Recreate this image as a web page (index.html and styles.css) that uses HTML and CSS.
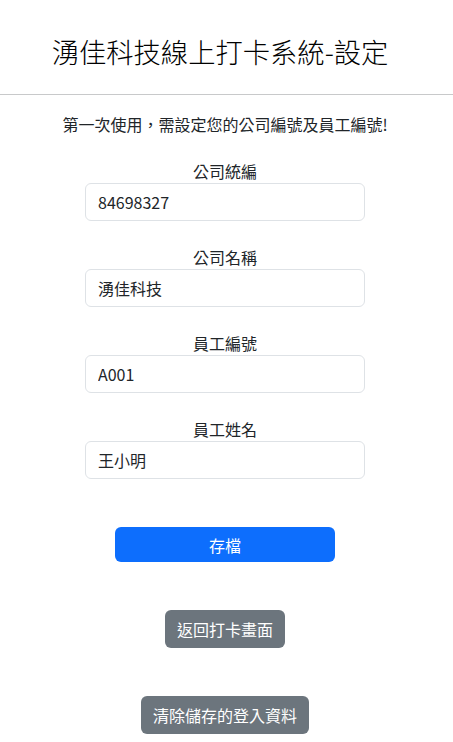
FILE: index.html
```html
<!DOCTYPE html>
<html>
<head>
  <meta charset="utf-8">
  <title>湧佳科技線上打卡系統-設定</title>
  <link rel="stylesheet" href="styles.css">
</head>
<body>
  <div class="header">
    <h1 class="title">湧佳科技線上打卡系統-設定</h1>
  </div>
  <hr class="divider">

  <div class="content">
    <p class="intro">第一次使用，需設定您的公司編號及員工編號!</p>

    <div class="form">
      <div class="field">
        <label for="comp-id">公司統編</label>
        <input id="comp-id" value="84698327">
      </div>
      <div class="field">
        <label for="comp-name">公司名稱</label>
        <input id="comp-name" value="湧佳科技">
      </div>
      <div class="field">
        <label for="emp-id">員工編號</label>
        <input id="emp-id" value="A001">
      </div>
      <div class="field">
        <label for="emp-name">員工姓名</label>
        <input id="emp-name" value="王小明">
      </div>
    </div>

    <div class="actions">
      <button class="btn btn-primary btn-save">存檔</button>
      <button class="btn btn-secondary">返回打卡畫面</button>
      <button class="btn btn-secondary">清除儲存的登入資料</button>
    </div>
  </div>
</body>
</html>
```

FILE: styles.css
```css
body {
  margin: 0;
  color: #212529;
  background-color: #fff;
  font-family: "Noto Sans CJK TC", "Noto Sans", sans-serif;
  font-size: 16px;
  line-height: 1.5;
}

.header {
  padding: 36px 13px 27px 0;
  text-align: center;
}

.title {
  margin: 0;
  font-size: 27.3px;
  font-weight: 300;
  line-height: 31px;
  color: #000;
}

.divider {
  margin: 0;
  border: 0;
  border-top: 1px solid #c8c9ca;
}

.content {
  padding-right: 3px;
}

.intro {
  margin: 17px 0 23px;
  text-align: center;
  font-size: 16px;
  line-height: 24px;
}

.form {
  display: flex;
  flex-direction: column;
  align-items: center;
  gap: 24px;
}

.field {
  display: flex;
  flex-direction: column;
  align-items: center;
  width: 280px;
}

.field label {
  line-height: 24px;
}

.field input {
  box-sizing: border-box;
  width: 100%;
  height: 38px;
  padding: 6px 12px;
  border: 1px solid #dee2e6;
  border-radius: 6px;
  font-family: inherit;
  font-size: 16px;
  color: #212529;
}

.actions {
  display: flex;
  flex-direction: column;
  align-items: center;
  gap: 48px;
  margin-top: 48px;
}

.btn {
  box-sizing: border-box;
  height: 38px;
  padding: 0 12px;
  border: 0;
  border-radius: 6px;
  color: #fff;
  font-family: inherit;
  font-size: 16px;
  cursor: pointer;
}

.btn-primary {
  background-color: #0d6efd;
}

.btn-save {
  width: 220px;
  height: 35px;
}

.btn-secondary {
  background-color: #6c757d;
}
```
